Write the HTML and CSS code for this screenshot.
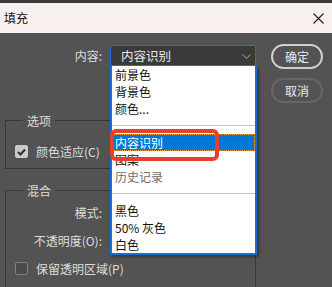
FILE: index.html
```html
<!DOCTYPE html>
<html lang="zh-CN">
<head>
    <meta charset="UTF-8">
    <meta name="viewport" content="width=device-width, initial-scale=1.0">
    <title>填充</title>
    <link rel="stylesheet" href="styles.css">
</head>
<body>
    <div class="topstrip"></div>
    <div class="titlebar">
        <span class="title">填充</span>
        <svg class="close" width="11" height="11" viewBox="0 0 11 11"><path d="M0.5 0.5 L10.5 10.5 M10.5 0.5 L0.5 10.5" stroke="#1e1e1e" stroke-width="1.1" fill="none"/></svg>
    </div>

    <div class="dialog">
        <div class="top">
            <label class="lbl">内容:</label>
            <div class="select">
                <span>内容识别</span>
                <svg class="chev" width="9" height="5" viewBox="0 0 9 5"><path d="M0.5 0.5 L4.5 4.3 L8.5 0.5" stroke="#a8a8a8" stroke-width="1" fill="none"/></svg>
            </div>
            <div class="buttons">
                <button class="btn ok">确定</button>
                <button class="btn cancel">取消</button>
            </div>
        </div>

        <fieldset class="group opts">
            <legend>选项</legend>
            <label class="check">
                <span class="box on"><svg width="9" height="8" viewBox="0 0 9 8"><path d="M1 4 L3.5 6.5 L8 1.5" stroke="#2e2e2e" stroke-width="2" fill="none"/></svg></span>
                颜色适应(C)
            </label>
        </fieldset>

        <fieldset class="group blend">
            <legend>混合</legend>
            <div class="field"><span class="flbl">模式:</span></div>
            <div class="field"><span class="flbl">不透明度(O):</span></div>
            <label class="check"><span class="box"></span>保留透明区域(P)</label>
        </fieldset>

        <!-- open dropdown of the select -->
        <ul class="menu">
            <li class="item">前景色</li>
            <li class="item">背景色</li>
            <li class="item">颜色...</li>
            <li class="sep"></li>
            <li class="item sel">内容识别</li>
            <li class="item">图案</li>
            <li class="item off">历史记录</li>
            <li class="sep"></li>
            <li class="item">黑色</li>
            <li class="item">50% 灰色</li>
            <li class="item">白色</li>
        </ul>

        <div class="mark"></div>
    </div>
</body>
</html>
```

FILE: styles.css
```css
* { box-sizing: border-box; }
body { margin: 0; width: 332px; height: 287px; overflow: hidden; font-family: "Noto Sans CJK SC", "Noto Sans", sans-serif; font-size: 12px; background: #535353; }

.topstrip { height: 3px; background: #3b3b3b; }
.titlebar { height: 30px; background: #f8f0ee; display: flex; align-items: center; justify-content: space-between; padding: 0 8px 0 4px; color: #111; }
.title { font-size: 12px; line-height: 16px; }

.dialog { position: relative; height: 254px; background: #535353; padding: 11px 0 0 5px; color: #dedede; }

.top { display: flex; align-items: flex-start; }
.lbl { width: 99px; text-align: right; line-height: 21px; margin-top: 1px; padding-right: 2px; }
.select { margin-left: 6px; margin-top: 1px; width: 146px; height: 21px; background: #3a3a3a; border: 1px solid #1a73d9; border-radius: 2px 2px 0 0; display: flex; align-items: center; justify-content: space-between; padding: 0 4px 0 10px; color: #e8e8e8; font-size: 12.5px; }
.chev { margin-top: 1px; }
.buttons { margin-left: 15px; display: flex; flex-direction: column; gap: 9px; }
.btn { width: 52px; height: 25px; border-radius: 13px; background: transparent; font-family: inherit; font-size: 12px; color: #ececec; padding: 0; }
.ok { border: 2px solid #cfcfcf; }
.cancel { border: 2px solid #676767; }

.group { width: 251px; margin: 0; border: 1px solid #383838; padding: 0 0 0 9px; min-inline-size: 0; }
.group legend { margin-left: 8px; padding: 0 4px; line-height: 17px; }
.opts { margin-top: 9px; padding-bottom: 8px; }
.opts .check { margin-top: 14px; }
.blend { margin-top: 13px; height: 110px; border-bottom: none; }

.field { height: 28px; display: flex; align-items: center; }
.blend .field:first-of-type { margin-top: -1px; }
.flbl { width: 87px; text-align: right; }

.check { display: flex; align-items: center; height: 17px; }
.blend .check { height: 28px; }
.box { width: 13px; height: 13px; margin-right: 8px; border-radius: 2px; border: 1px solid #808080; background: #4a4a4a; display: flex; align-items: center; justify-content: center; }
.box.on { background: #cacaca; border-color: #cacaca; }

.menu { position: absolute; top: 33px; left: 110px; width: 147px; margin: 0; padding: 0; list-style: none; background: #fff; border: 2px solid #1170d9; border-top: none; box-shadow: 2px 2px 3px rgba(0, 0, 0, 0.35); color: #111; }
.item { height: 17px; line-height: 17px; padding-left: 3px; font-size: 12px; }
.item.sel { background: #0078d7; color: #fff; outline: 1px dotted #f0a23c; outline-offset: -1px; margin-left: 1px; padding-left: 2px; }
.item.off { color: #6e6e6e; }
.sep { height: 17px; display: flex; align-items: center; }
.sep::after { content: ""; flex: 1; height: 1px; background: #c2c2c2; }

.mark { position: absolute; top: 96px; left: 110px; width: 109px; height: 32px; border: 4px solid #e6402a; border-radius: 6px; }
```
